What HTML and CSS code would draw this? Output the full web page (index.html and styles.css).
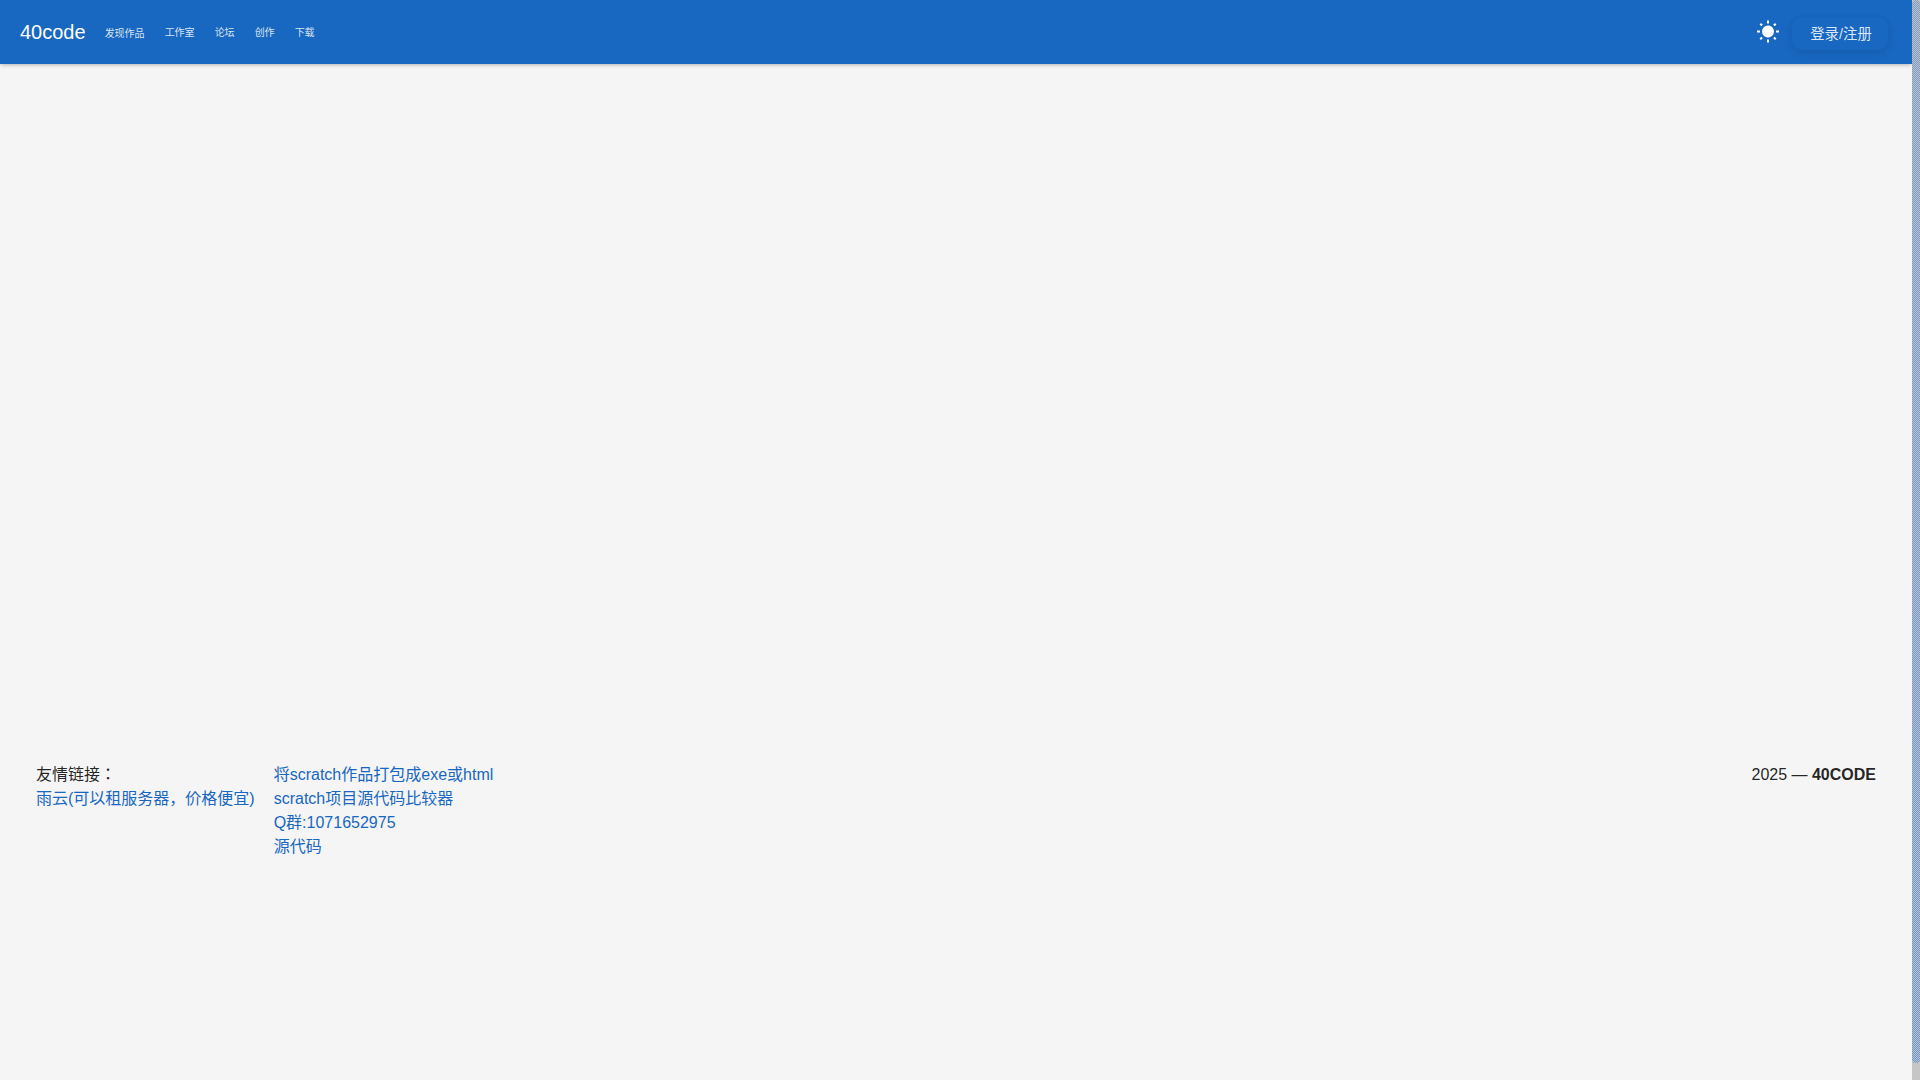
FILE: index.html
```html
<!DOCTYPE html>
<html>
<head>
    <meta charset="UTF-8">
    <meta name="viewport" content="width=device-width, initial-scale=1.0">
    <title>40code</title>
    <link rel="stylesheet" href="styles.css">
</head>
<body>

    <div class="page">
        <header class="app-bar">
            <a class="brand" href="#">40code</a>
            <nav class="nav">
                <a class="nav-link nav-link-first" href="#">发现作品</a>
                <a class="nav-link" href="#">工作室</a>
                <a class="nav-link" href="#">论坛</a>
                <a class="nav-link" href="#">创作</a>
                <a class="nav-link" href="#">下载</a>
            </nav>
            <div class="spacer"></div>
            <button class="theme-button" aria-label="theme">
                <svg class="sun" viewBox="0 0 24 24" width="24" height="24">
                    <path d="M3.55,18.54L4.96,19.95L6.76,18.16L5.34,16.74M11,22.45C11.32,22.45 13,22.45 13,22.45V19.5H11M12,5.5A6,6 0 0,0 6,11.5A6,6 0 0,0 12,17.5A6,6 0 0,0 18,11.5C18,8.18 15.31,5.5 12,5.5M20,12.5H23V10.5H20M17.24,18.16L19.04,19.95L20.45,18.54L18.66,16.74M20.45,4.46L19.04,3.05L17.24,4.84L18.66,6.26M13,0.55H11V3.5H13M4,10.5H1V12.5H4M6.76,4.84L4.96,3.05L3.55,4.46L5.34,6.26L6.76,4.84Z"/>
                </svg>
            </button>
            <button class="login-button">登录/注册</button>
        </header>

        <main class="main"></main>

        <footer class="footer">
            <div class="friend-links">
                <div class="link-col">
                    <div>友情链接：</div>
                    <a href="#">雨云(可以租服务器，价格便宜)</a>
                </div>
                <div class="link-col">
                    <a href="#">将scratch作品打包成exe或html</a>
                    <a href="#">scratch项目源代码比较器</a>
                    <a href="#">Q群:1071652975</a>
                    <a href="#">源代码</a>
                </div>
            </div>
            <div class="copyright">2025 — <strong>40CODE</strong></div>
        </footer>
    </div>

    <div class="scrollbar">
        <div class="scrollbar-thumb"></div>
    </div>

</body>
</html>
```

FILE: styles.css
```css
body {
    display: flex;
    height: 100vh;
    margin: 0;
    overflow: hidden;
    font-family: "Liberation Sans", "Noto Sans CJK JP", sans-serif;
    font-size: 16px;
    line-height: 24px;
    color: rgba(0, 0, 0, 0.87);
    background: #f5f5f5;
}

a {
    color: #1867c0;
    text-decoration: none;
}

.page {
    flex: 1;
    min-width: 0;
}

/* the page scrolls in the original, the bar has to be drawn by hand here */
.scrollbar {
    display: flex;
    width: 8px;
    height: 100%;
    background: #c6c6c6;
}

/* 1px checker, the thumb is dithered in the reference */
.scrollbar-thumb {
    width: 100%;
    height: 1063px;
    background:
        linear-gradient(rgba(175, 180, 190, 0.35), rgba(175, 180, 190, 0.05)),
        repeating-conic-gradient(#6b93cb 0 25%, #bcc6d0 0 50%) 0 0 / 2px 2px;
    border-radius: 4px;
}

.app-bar {
    display: flex;
    align-items: center;
    height: 64px;
    padding: 0 24px 0 20px;
    background: #1867c0;
    color: #fff;
    box-shadow: 0 2px 4px -1px rgba(0, 0, 0, 0.2), 0 1px 3px rgba(0, 0, 0, 0.08);
}

.brand {
    color: #fff;
    font-size: 20px;
}

.nav {
    display: flex;
    gap: 20px;
    margin-left: 19px;
    padding-top: 2px;
}

.nav-link {
    color: rgba(255, 255, 255, 0.85);
    font-size: 10px;
}

.nav-link-first {
    margin-top: 1px;
}

.spacer {
    flex: 1;
}

.theme-button {
    display: flex;
    padding: 0;
    margin-right: 12px;
    border: none;
    background: none;
}

.sun {
    fill: #fff;
}

.login-button {
    width: 96px;
    height: 33px;
    margin-top: 3px;
    padding: 0 0 2px 2px;
    border: none;
    border-radius: 10px;
    background: #1867c0;
    color: rgba(255, 255, 255, 0.85);
    font-family: inherit;
    font-size: 14.4px;
    box-shadow: 0 4px 8px rgba(0, 0, 0, 0.07), 0 0 6px rgba(0, 0, 0, 0.03);
}

.main {
    height: 699px;
}

.footer {
    display: flex;
    justify-content: space-between;
    padding: 0 36px;
}

.friend-links {
    display: flex;
    gap: 19px;
}

.link-col {
    display: flex;
    flex-direction: column;
}
```
